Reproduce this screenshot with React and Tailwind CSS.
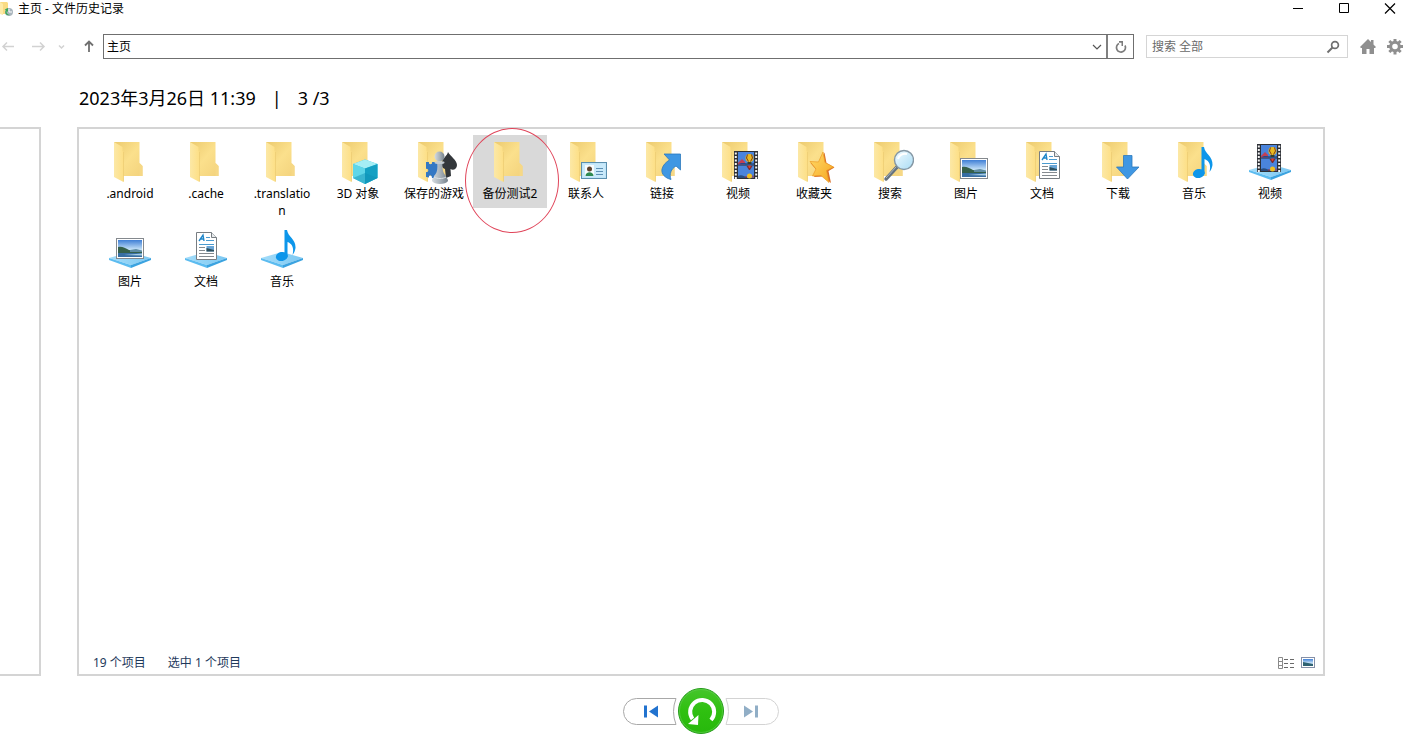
import React, { useState } from "react";

// Shared gradients, referenced by id from every icon
const IconDefs = () => (
  <svg className="absolute h-0 w-0" aria-hidden="true">
    <defs>
      <linearGradient id="folderBack" x1="0" y1="0" x2="1" y2="1">
        <stop offset="0" stopColor="#ecca6e" />
        <stop offset="0.5" stopColor="#fbe08c" />
        <stop offset="1" stopColor="#f3d27c" />
      </linearGradient>
      <linearGradient id="folderFlap" x1="0" y1="0" x2="1" y2="0">
        <stop offset="0" stopColor="#fce8a6" />
        <stop offset="1" stopColor="#fddf85" />
      </linearGradient>
      <linearGradient id="sky" x1="0" y1="0" x2="0" y2="1">
        <stop offset="0" stopColor="#3f7fd6" />
        <stop offset="0.6" stopColor="#cfe9fa" />
        <stop offset="1" stopColor="#5b92bd" />
      </linearGradient>
      <linearGradient id="base" x1="0" y1="0" x2="1" y2="0">
        <stop offset="0" stopColor="#a3dcf9" />
        <stop offset="1" stopColor="#7cc8f2" />
      </linearGradient>
      <linearGradient id="pawn" x1="0" y1="0" x2="1" y2="0">
        <stop offset="0" stopColor="#d5dbe0" />
        <stop offset="0.5" stopColor="#a9b3bb" />
        <stop offset="1" stopColor="#75818b" />
      </linearGradient>
      <linearGradient id="star" x1="0" y1="0" x2="1" y2="1">
        <stop offset="0" stopColor="#ffdc6b" />
        <stop offset="1" stopColor="#f6a51e" />
      </linearGradient>
      <linearGradient id="lens" x1="0" y1="0" x2="1" y2="1">
        <stop offset="0" stopColor="#f2fbff" />
        <stop offset="1" stopColor="#a9dcf5" />
      </linearGradient>
      <linearGradient id="restore" x1="0" y1="0" x2="0" y2="1">
        <stop offset="0" stopColor="#46c52c" />
        <stop offset="0.5" stopColor="#2fc010" />
        <stop offset="1" stopColor="#27b80c" />
      </linearGradient>
    </defs>
  </svg>
);

const Folder = () => (
  <>
    <path d="M8 6H33.500V27L36.500 30V40H14Z" fill="url(#folderBack)" />
    <path d="M33.500 27L36.500 30V40H33.500Z" fill="#f6d886" />
    <path d="M8 6L16.500 11V15L17.500 16V46L8 41Z" fill="url(#folderFlap)" />
    <path d="M17.500 16V45.500" stroke="#edcd74" strokeWidth="0.800" />
  </>
);

const LibraryBase = () => (
  <>
    <path d="M3 34L24 28L45 34L25 41Z" fill="url(#base)" />
    <path d="M3 34L25 41V44L3 36Z" fill="#5cbcf0" />
    <path d="M45 34L25 41V44L45 36Z" fill="#3ba3e0" />
  </>
);

const Cube = () => (
  <>
    <path d="M31 23.500L43.500 28V42L31 48L19 42V28Z" fill="#35c3dd" />
    <path d="M19 28L31 23.500L43.500 28L31 32.500Z" fill="#a5eef5" />
    <path d="M19 28L31 32.500V48L19 42Z" fill="#5fd6e8" />
    <path d="M43.500 28L31 32.500V48L43.500 42Z" fill="#14a0c3" />
    <path d="M19 42L31 37L43.500 42L31 48Z" fill="#0e8fb4" opacity="0.45" />
  </>
);

const Games = () => (
  <>
    <path d="M16 26H19C18 29 23 29 22 26H28V43L22 42C22 38.500 18.500 38.500 19 41.500L16 41V36C19 37 19 32 16 33Z" fill="#3478c4" />
    <path d="M38 16C40 20 47 24 47 29C47 33 43 35 40.500 33L41 40L36 42L35 33C32 32 31 29 32 26C33 22 37 20 38 16Z" fill="#33373b" />
    <path d="M27 26H32.500C32 33 33 37 36 40C36 42 38 42 38 45C36 49 24 49 22 45C22 42 24 42 24 40C27 37 28 33 27 26Z" fill="url(#pawn)" />
    <circle cx="29.500" cy="20.500" r="5" fill="url(#pawn)" />
    <ellipse cx="29.500" cy="26.500" rx="5" ry="1.500" fill="#c3cad0" />
    <path d="M24 41C27 43 33 43 36 41" stroke="#dde2e6" fill="none" />
  </>
);

const Card = () => (
  <>
    <rect x="19.500" y="26.500" width="25" height="16" fill="#bfe4f8" stroke="#5b8fae" />
    <rect x="21" y="28" width="22" height="13" fill="#c9e9fa" />
    <rect x="23" y="29" width="9" height="11" fill="#f7fbfd" />
    <path d="M23.500 40C23.500 35 31.500 35 31.500 40Z" fill="#2f8a52" />
    <circle cx="27.500" cy="33" r="2.500" fill="#5d4330" />
    <path d="M34 32.500H41M34 35.500H41M34 38.500H41" stroke="#5d90b5" />
  </>
);

const LinkArrow = () => (
  <path d="M26 18H42.500V34L38 30C33 33 31 38 33 43.500C27 42 23 38 24 33C25 29 28 26 31.500 24Z" fill="#3f97e3" stroke="#2c78bd" strokeWidth="0.800" />
);

const Film = () => (
  <>
    <rect x="0" y="0" width="24" height="28" fill="#2d3036" />
    <path d="M1.800 1.500V28M22.200 1.500V28" stroke="#f4f4f4" strokeWidth="2" strokeDasharray="2 1.500" />
    <rect x="4" y="1" width="16" height="12.500" fill="#4a84dc" />
    <rect x="4" y="14.500" width="16" height="12.500" fill="#4a84dc" />
    <path d="M4 12L8 8L11 11V13.500H4Z" fill="#c23f55" />
    <path d="M4 13.500C9 10 13 14 20 12V13.500Z" fill="#234a8c" />
    <circle cx="15.500" cy="7" r="4" fill="#e8b91e" />
    <path d="M13.500 3.500L12.500 7L14.500 10.500M17.500 3.500L18.500 7L16.500 10.500" stroke="#7b3a20" strokeWidth="1" fill="none" />
    <path d="M13.500 11H17.500V13H13.500Z" fill="#34402b" />
    <path d="M12.500 15H18.500L16 19H15Z" fill="#7d2c2c" />
    <path d="M14 14.500H17L16 17H15Z" fill="#e23a2e" />
    <circle cx="15.500" cy="25" r="2.500" fill="#f0bf1e" />
    <path d="M4 25C8 23 10 26 13 26V27H4Z" fill="#284d80" />
    <path d="M12 27V25M19 27V24.500" stroke="#b02a2a" />
  </>
);

const Star = () => (
  <>
    <path d="M34.500 16.500L36.500 27L44.500 31.500L38.500 35L41 47L33 40.500L24 41L27 34.500L20.500 27L29.500 27Z" fill="#d9702a" />
    <path d="M33 16L35 26.500L43.500 31L36.500 34.500L39 46.500L31 39.500L22.500 40L26 33L20 25.500L28.500 26Z" fill="url(#star)" stroke="#ee9c22" strokeWidth="0.700" />
  </>
);

const Magnifier = () => (
  <>
    <path d="M31 31L20 43" stroke="#66737e" strokeWidth="3.500" strokeLinecap="round" />
    <path d="M30 31L20 42" stroke="#aab5bd" strokeWidth="1" />
    <circle cx="38" cy="24" r="9.500" fill="url(#lens)" stroke="#8597a4" strokeWidth="1.400" />
    <path d="M32 23C33 19 37 17 41 18" stroke="#ffffff" strokeWidth="2" fill="none" />
  </>
);

const Photo = () => (
  <>
    <rect x="0.500" y="0.500" width="27" height="20" fill="#ffffff" stroke="#84898e" />
    <rect x="2" y="2" width="24" height="17" fill="url(#sky)" />
    <path d="M2 9C6 8 9 10 13 12L26 14V15H2Z" fill="#35604b" />
    <path d="M14 12L20 11L26 12.500V14H14Z" fill="#5e8ba3" />
    <path d="M2 15H26V19H2Z" fill="#376ea3" />
    <path d="M8 17L26 15.500V17.500Z" fill="#a7cce3" />
  </>
);

const Sheet = () => (
  <>
    <path d="M0.500 0.500H15.500L20.500 5.500V27.500H0.500Z" fill="#ffffff" stroke="#777d82" />
    <path d="M15.500 0.500V5.500H20.500" fill="#e8ebed" stroke="#777d82" />
    <path d="M3 9L7 3L8 9M4.500 7H8" stroke="#1f86c9" strokeWidth="1.400" fill="none" />
    <path d="M10 5.500H14M10 8.500H18M3 12.500H18" stroke="#4a9bd0" />
    <path d="M3 15.500H9M3 18.500H9M3 21.500H18M3 24.500H18" stroke="#858b90" />
    <rect x="10.500" y="14" width="7.500" height="5.500" fill="#69a5d6" />
    <path d="M10.500 16L18 18V19.500H10.500Z" fill="#2e4f5d" />
  </>
);

const DownArrow = () => (
  <path d="M29.500 19.500H38V31H45L33.500 43L22.500 31H29.500Z" fill="#3f97e3" stroke="#2c78bd" strokeWidth="0.800" />
);

const Note = () => (
  <>
    <path d="M4.500 1H7C8 8 16 10 15.500 19C15 22 14 24 12.500 26C14 20 13 15 7.500 13V28H4.500Z" fill="#0d96ea" />
    <ellipse cx="1.800" cy="27.500" rx="6" ry="4.500" fill="#0d96ea" transform="rotate(-12 1.800 27.500)" />
  </>
);

const icons = {
  folder: <Folder />,
  objects: <><Folder /><Cube /></>,
  games: <><Folder /><Games /></>,
  contacts: <><Folder /><Card /></>,
  links: <><Folder /><LinkArrow /></>,
  videos: <><Folder /><g transform="translate(20 15)"><Film /></g></>,
  favorites: <><Folder /><Star /></>,
  searches: <><Folder /><Magnifier /></>,
  pictures: <><Folder /><g transform="translate(18 22)"><Photo /></g></>,
  documents: <><Folder /><g transform="translate(21 15)"><Sheet /></g></>,
  downloads: <><Folder /><DownArrow /></>,
  music: <><Folder /><g transform="translate(27 10)"><Note /></g></>,
  videoLibrary: <><LibraryBase /><g transform="translate(11 8)"><Film /></g></>,
  pictureLibrary: <><LibraryBase /><g transform="translate(10 14)"><Photo /></g></>,
  documentLibrary: <><LibraryBase /><g transform="translate(14 8)"><Sheet /></g></>,
  musicLibrary: <><LibraryBase /><g transform="translate(22 5)"><Note /></g></>,
};

const items = [
  { name: ".android", icon: "folder" },
  { name: ".cache", icon: "folder" },
  { name: ".translation", icon: "folder" },
  { name: "3D 对象", icon: "objects" },
  { name: "保存的游戏", icon: "games" },
  { name: "备份测试2", icon: "folder", marked: true },
  { name: "联系人", icon: "contacts" },
  { name: "链接", icon: "links" },
  { name: "视频", icon: "videos" },
  { name: "收藏夹", icon: "favorites" },
  { name: "搜索", icon: "searches" },
  { name: "图片", icon: "pictures" },
  { name: "文档", icon: "documents" },
  { name: "下载", icon: "downloads" },
  { name: "音乐", icon: "music" },
  { name: "视频", icon: "videoLibrary" },
  { name: "图片", icon: "pictureLibrary" },
  { name: "文档", icon: "documentLibrary" },
  { name: "音乐", icon: "musicLibrary" },
];

const TitleBar = () => (
  <header className="flex h-[17px] items-center">
    <svg className="h-4 w-4" viewBox="0 0 16 16" aria-hidden="true">
      <path d="M0 1H7L8 2V13H0Z" fill="#f9db83" />
      <path d="M0 1L3 3V14L0 13Z" fill="#fdeaa8" />
      <circle cx="9" cy="11" r="4" fill="#a9b5bd" />
      <path d="M9 8V11H12" stroke="#ffffff" fill="none" />
      <path d="M10 14C6 15 4 12 6 9L4.500 8.500L8 7V11L6.800 10C6 12 7.500 13.500 10 14Z" fill="#3aa757" />
    </svg>
    <h1 className="ml-0.5 flex-1 text-xs">主页 - 文件历史记录</h1>
    <button aria-label="最小化" className="flex w-[46px] justify-center">
      <svg className="h-3 w-3" viewBox="0 0 12 12"><path d="M1 5.500H11" stroke="#000000" /></svg>
    </button>
    <button aria-label="最大化" className="flex w-[46px] justify-center">
      <svg className="h-3 w-3" viewBox="0 0 12 12"><path d="M1.500 0.500H10.500V9.500H1.500Z" stroke="#000000" fill="none" /></svg>
    </button>
    <button aria-label="关闭" className="mr-[-6px] flex w-[46px] justify-center">
      <svg className="h-3 w-3" viewBox="0 0 12 12"><path d="M1 0.500L11 10.500M11 0.500L1 10.500" stroke="#000000" strokeWidth="1.200" /></svg>
    </button>
  </header>
);

const Toolbar = () => {
  const [path, setPath] = useState("主页");
  const [query, setQuery] = useState("");

  return (
    <nav className="mt-[17px] flex h-[25px] items-center">
      <button aria-label="后退" className="w-4">
        <svg className="h-4 w-4" viewBox="0 0 16 16" fill="none" stroke="#d2d2d2" strokeWidth="1.500"><path d="M14 7.500H3M7 3.500L3 7.500L7 11.500" /></svg>
      </button>
      <button aria-label="前进" className="ml-[15px] w-4">
        <svg className="h-4 w-4" viewBox="0 0 16 16" fill="none" stroke="#d2d2d2" strokeWidth="1.500"><path d="M1 7.500H13M9 3.500L13 7.500L9 11.500" /></svg>
      </button>
      <button aria-label="最近位置" className="ml-2.5 w-2.5">
        <svg className="h-2.5 w-2.5" viewBox="0 0 10 10" fill="none" stroke="#d2d2d2" strokeWidth="1.500"><path d="M2 3.500L4.500 6L7 3.500" /></svg>
      </button>
      <button aria-label="向上" className="ml-[14px] w-4">
        <svg className="h-4 w-4" viewBox="0 0 16 16" fill="none" stroke="#707070" strokeWidth="1.800"><path d="M8 13V2.500M4 6.500L8 2.500L12 6.500" /></svg>
      </button>
      <div className="ml-1.5 flex h-full flex-1 items-center border border-[#6f6f6f]">
        <input
          aria-label="地址"
          value={path}
          onChange={(e) => setPath(e.target.value)}
          className="min-w-0 flex-1 px-[3px] text-xs outline-none"
        />
        <button aria-label="展开" className="mr-[3px] w-3">
          <svg className="h-2.5 w-3" viewBox="0 0 12 10" fill="none" stroke="#555555" strokeWidth="1.200"><path d="M2 3L6 7L10 3" /></svg>
        </button>
        <button aria-label="刷新" className="flex h-full w-[27px] items-center justify-center border-l-2 border-[#808080]">
          <svg className="h-3.5 w-3.5" viewBox="0 0 14 14">
            <path d="M5 3.500A4.500 4.500 0 1 0 11 5.500" fill="none" stroke="#7c7c7c" strokeWidth="1.700" />
            <path d="M5 1H9V6H7.500V2.800H5Z" fill="#7c7c7c" />
          </svg>
        </button>
      </div>
      <div className="ml-3 flex h-[23px] w-[202px] items-center border border-[#d5d5d5]">
        <input
          aria-label="搜索"
          placeholder="搜索 全部"
          value={query}
          onChange={(e) => setQuery(e.target.value)}
          className="min-w-0 flex-1 px-[5px] text-xs outline-none placeholder:text-[#6a6a6a]"
        />
        <svg className="mr-[7px] h-3.5 w-3.5" viewBox="0 0 14 14" fill="none" stroke="#6f6f6f" strokeWidth="1.700" aria-hidden="true">
          <circle cx="9" cy="5" r="3.400" />
          <path d="M6.500 7.500L1.500 12.500" strokeWidth="2" />
        </svg>
      </div>
      <button aria-label="主页" className="ml-3 w-4">
        <svg className="h-4 w-4" viewBox="0 0 16 16" fill="#8f8f8f">
          <path d="M8 0L11 3V1H13.500V5.500L16 8L15 9H14V15H9.500V10H6.500V15H2V9H1L0 8Z" />
        </svg>
      </button>
      <button aria-label="设置" className="mr-1 ml-[11px] w-4">
        <svg className="h-4 w-4" viewBox="0 0 16 16" fill="none" stroke="#8f8f8f">
          <circle cx="8" cy="7.500" r="4.300" strokeWidth="3" />
          <path d="M8 0V3M8 12V15.500M0 7.500H3M13 7.500H16M2.300 2L4.500 4M11.500 11L13.700 13M13.700 2L11.500 4M4.500 11L2.300 13" strokeWidth="3" />
        </svg>
      </button>
    </nav>
  );
};

const Tile = ({ item, selected, onSelect }) => (
  <button
    onClick={onSelect}
    className={`relative flex flex-col items-center px-1.5 pt-px pb-1.5 ${selected ? "bg-[#d9d9d9]" : ""}`}
  >
    <svg className="h-12 w-12" viewBox="0 0 48 48" aria-hidden="true">
      {icons[item.icon]}
    </svg>
    <span className="mt-px w-full text-center text-xs leading-[17px] break-all">{item.name}</span>
    {item.marked && (
      <span className="pointer-events-none absolute -top-[7px] -left-2 h-[105px] w-[94px] rounded-[50%] border border-[#e0455a]" />
    )}
  </button>
);

const FilePanel = () => {
  const [selected, setSelected] = useState(5);

  return (
    <section className="mr-[82px] ml-9 flex flex-1 flex-col border-2 border-[#d4d4d4]">
      <div className="grid flex-1 auto-rows-[88px] grid-cols-[repeat(auto-fill,74px)] content-start items-start gap-x-0.5 px-[14px] pt-1.5">
        {items.map((item, i) => (
          <Tile key={i} item={item} selected={selected === i} onSelect={() => setSelected(i)} />
        ))}
      </div>
      <footer className="flex h-[23px] items-center pr-2 pl-[14px] text-xs text-[#1e395b]">
        <span>{items.length} 个项目</span>
        <span className="ml-[22px] flex-1">选中 1 个项目</span>
        <button aria-label="详细信息">
          <svg className="h-3 w-4" viewBox="0 0 16 12" fill="none" stroke="#8a8a8a">
            <path d="M0.500 0.500H4.500V11.500H0.500ZM0.500 4.500H4.500M0.500 8.500H4.500" />
            <path d="M6 2.500H10M12 2.500H16M6 6.500H10M12 6.500H16M6 10.500H10M12 10.500H16" stroke="#6a6a6a" />
          </svg>
        </button>
        <button aria-label="大图标" className="ml-[7px]">
          <svg className="h-3 w-3.5" viewBox="0 0 14 12">
            <rect x="0.500" y="0.500" width="13" height="10" fill="#ffffff" stroke="#8590a8" />
            <rect x="2" y="2" width="10" height="7" fill="url(#sky)" />
            <path d="M2 5L12 7V9H2Z" fill="#2f6272" />
          </svg>
        </button>
      </footer>
    </section>
  );
};

const Playback = () => (
  <div className="mt-[11px] mb-[5px] flex items-center justify-center pr-[5px]">
    <button aria-label="上一个版本">
      <svg className="h-[27px] w-[54px]" viewBox="0 0 54 27">
        <path d="M53 0.500H13.500A13 13 0 0 0 13.500 26.500H53Q48 13.500 53 0.500Z" fill="#ffffff" stroke="#a8a8a8" />
        <path d="M21 7.500H24V19.500H21ZM35 7.500V19.500L26 13.500Z" fill="#2273cf" />
      </svg>
    </button>
    <button aria-label="还原">
      <svg className="h-12 w-12" viewBox="0 0 48 48">
        <circle cx="24" cy="24" r="22.500" fill="url(#restore)" stroke="#259b1b" />
        <circle cx="24" cy="24" r="21.500" fill="none" stroke="#5fcf4b" strokeWidth="0.700" />
        <path d="M34 33A12 12 0 1 0 15.500 32" fill="none" stroke="#ffffff" strokeWidth="4" />
        <path d="M21.500 28L21 38L11 37Z" fill="#ffffff" />
      </svg>
    </button>
    <button aria-label="下一个版本">
      <svg className="h-[27px] w-[54px]" viewBox="0 0 54 27">
        <path d="M1 0.500H40.500A13 13 0 0 1 40.500 26.500H1Q6 13.500 1 0.500Z" fill="#ffffff" stroke="#d3d3d3" />
        <path d="M30 7.500H33V19.500H30ZM19 7.500V19.500L28 13.500Z" fill="#91aec6" />
      </svg>
    </button>
  </div>
);

const App = () => (
  <div className="flex min-h-screen flex-col overflow-hidden bg-white font-['Noto_Sans','Noto_Sans_CJK_SC',sans-serif] text-black">
    <IconDefs />
    <TitleBar />
    <Toolbar />
    <h2 className="mt-[26px] mb-[15px] ml-[79px] flex gap-4 text-lg leading-[27px]">
      <span>2023年3月26日 11:39</span>
      <span>|</span>
      <span>3 /3</span>
    </h2>
    <main className="flex flex-1">
      <div className="w-[41px] border-2 border-l-0 border-[#d4d4d4]" />
      <FilePanel />
    </main>
    <Playback />
  </div>
);

export default App;
